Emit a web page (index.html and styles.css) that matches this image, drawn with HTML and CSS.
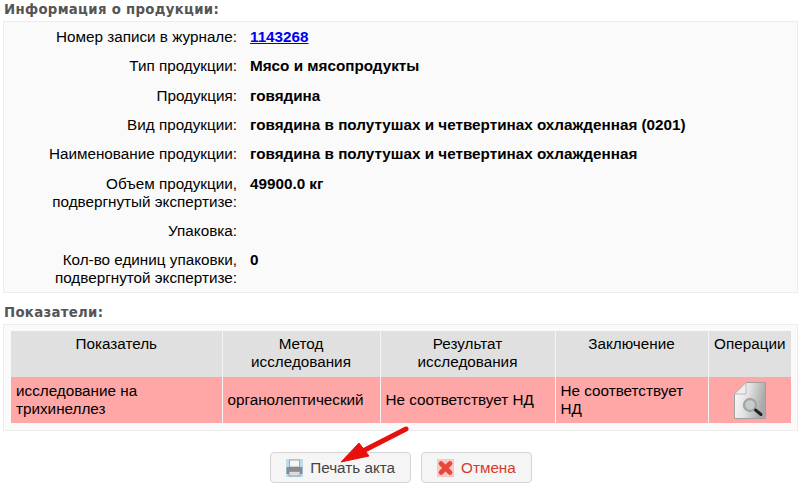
FILE: index.html
```html
<!DOCTYPE html>
<html lang="ru">
<head>
<meta charset="utf-8">
<title>Информация о продукции</title>
<link rel="stylesheet" href="styles.css">
</head>
<body>
<div class="page">
  <h2 class="legend">Информация о продукции:</h2>
  <div class="box info-box">
    <table class="info">
      <tr><th>Номер записи в журнале:</th><td><a href="#">1143268</a></td></tr>
      <tr><th>Тип продукции:</th><td>Мясо и мясопродукты</td></tr>
      <tr><th>Продукция:</th><td>говядина</td></tr>
      <tr><th>Вид продукции:</th><td>говядина в полутушах и четвертинах охлажденная (0201)</td></tr>
      <tr><th>Наименование продукции:</th><td>говядина в полутушах и четвертинах охлажденная</td></tr>
      <tr class="two"><th>Объем продукции,<br>подвергнутый экспертизе:</th><td>49900.0 кг</td></tr>
      <tr><th>Упаковка:</th><td></td></tr>
      <tr class="two"><th>Кол-во единиц упаковки,<br>подвергнутой экспертизе:</th><td>0</td></tr>
    </table>
  </div>
  <h2 class="legend second">Показатели:</h2>
  <div class="box grid-box">
    <table class="grid">
      <colgroup><col class="c1"><col class="c2"><col class="c3"><col class="c4"><col class="c5"></colgroup>
      <thead>
        <tr><th>Показатель</th><th>Метод<br>исследования</th><th>Результат<br>исследования</th><th>Заключение</th><th>Операции</th></tr>
      </thead>
      <tbody>
        <tr>
          <td>исследование на<br>трихинеллез</td>
          <td>органолептический</td>
          <td>Не соответствует НД</td>
          <td>Не соответствует<br>НД</td>
          <td class="op">
            <svg class="doc" width="32" height="37" viewBox="0 0 32 37">
              <defs>
                <linearGradient id="dg" x1="0" y1="0" x2="1" y2="0.25"><stop offset="0" stop-color="#fdfdfd"/><stop offset="0.5" stop-color="#e2e2e2"/><stop offset="1" stop-color="#a9a9a9"/></linearGradient>
              </defs>
              <path d="M12 .5H31.5V36.5H.5V12Z" fill="url(#dg)" stroke="#a0a0a0"/>
              <path d="M12 .5V12H.5Z" fill="#eeeeee" stroke="#b8b8b8"/>
              <circle cx="16" cy="23" r="6" fill="#c5cccd" stroke="#a5a5a5" stroke-width="2.4"/>
              <path d="M21.5 28L27 32.5" stroke="#222" stroke-width="3" stroke-linecap="round"/>
            </svg>
          </td>
        </tr>
      </tbody>
    </table>
  </div>
  <div class="actions">
    <button class="btn print" type="button">
      <svg width="17" height="18" viewBox="0 0 17 18">
        <rect width="17" height="18" fill="#bcdcf0"/>
        <rect x="3.5" y="1" width="10" height="7" fill="#f6f6f6" stroke="#9a9a9a" stroke-width=".8"/>
        <path d="M.5 8H16.5V15H.5Z" fill="#868c8f"/>
        <rect x="3" y="12.5" width="11" height="4.5" fill="#dcdcdc" stroke="#8a8a8a" stroke-width=".7"/>
      </svg>
      Печать акта
    </button>
    <button class="btn cancel" type="button">
      <svg width="17" height="18" viewBox="0 0 17 18">
        <rect width="17" height="18" fill="#f8c8c4"/>
        <path d="M4 4.5L13 13.5M13 4.5L4 13.5" stroke="#e8473c" stroke-width="4.6" stroke-linecap="round"/>
      </svg>
      Отмена
    </button>
  </div>
  <svg class="arrow" width="90" height="50" viewBox="0 0 90 50">
    <path d="M75 5L26 30" stroke="#e8100c" stroke-width="5" stroke-linecap="round"/>
    <path d="M10 38L28 19L38 32Z" fill="#e8100c" stroke="#e8100c" stroke-linejoin="round"/>
  </svg>
</div>
</body>
</html>
```
FILE: styles.css
```css
html, body { margin: 0; padding: 0; background: #fff; }
body { font-family: "Liberation Sans", Arial, sans-serif; font-size: 15.25px; color: #000; width: 800px; height: 488px; overflow: hidden; }
.page { position: relative; height: 488px; padding: 0 2px 0 3px; box-sizing: border-box; }
.legend { margin: 0; font: bold 13.3px/16px "DejaVu Sans", sans-serif; color: #555; letter-spacing: .3px; padding: 2px 0 0 1px; height: 21px; box-sizing: border-box; }
.second { margin-top: 10px; }
.box { border: 1px solid #ececec; background: #fafafa; box-sizing: border-box; }
.info-box { height: 272px; }
.info { border-collapse: collapse; }
.info th { width: 233px; padding: 0 6px 0 0; text-align: right; font-weight: normal; vertical-align: top; }
.info td { padding: 0 0 0 7px; font-weight: bold; vertical-align: top; }
.info th, .info td { line-height: 18px; padding-top: 6px; padding-bottom: 5.35px; }
.info a { color: #0000ee; }
.grid-box { height: 107px; padding: 6px 6px 0 7px; }
.grid { border-collapse: collapse; table-layout: fixed; width: 780px; }
.c1 { width: 211px; } .c2 { width: 158px; } .c3 { width: 175px; } .c4 { width: 153px; } .c5 { width: 83px; }
.grid th, .grid td { border-left: 1px solid #f4f4f4; line-height: 18px; }
.grid th:first-child, .grid td:first-child { border-left: 0; }
.grid th { background: #e0e0e0; font-weight: normal; text-align: center; vertical-align: top; height: 46px; padding: 4px 2px 0; box-sizing: border-box; }
.grid td { background: #ffa6a6; height: 46px; padding: 0 5px; box-sizing: border-box; vertical-align: middle; }
.grid td.op { text-align: center; padding: 0; }
.doc { display: block; margin: 0 auto; }
.actions { display: flex; justify-content: center; gap: 10px; margin: 21px 0 0 1px; }
.btn { display: flex; align-items: center; gap: 7px; height: 31px; border: 1px solid #d5d5d5; border-radius: 4px; background: #f5f5f5; font: 15.25px "Liberation Sans", Arial, sans-serif; color: #444; padding: 0 15px; box-sizing: border-box; }
.cancel { color: #d43b2b; }
.arrow { position: absolute; left: 331px; top: 424px; }
```
